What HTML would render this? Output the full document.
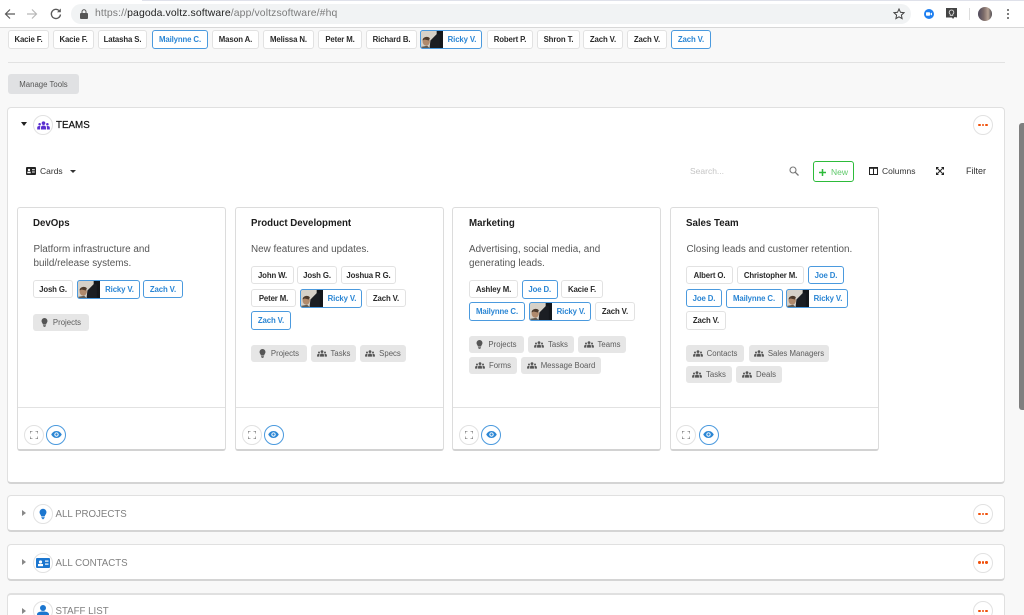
<!DOCTYPE html>
<html><head><meta charset="utf-8"><style>
*{box-sizing:border-box}
html,body{margin:0;padding:0;width:1024px;height:615px;overflow:hidden;background:#f8f8f8;font-family:"Liberation Sans",sans-serif;color:#222}
#w{position:relative;width:1024px;height:615px;overflow:hidden;background:#f8f8f8}
.a{position:absolute}
.c{position:absolute;height:18px;background:#fff;border:1px solid #e2e2e2;border-radius:3px;font-size:7.8px;font-weight:700;color:#2a2a2a;display:flex;align-items:center;justify-content:center;white-space:nowrap;letter-spacing:-.12px}
.b{border-color:#4b9ade;color:#2b86d4}
.p{position:absolute;left:-1px;top:-1px;bottom:-1px;width:23px;border-radius:3px 0 0 3px;overflow:hidden;border:1px solid #4b9ade;border-right:0}
.r{padding-left:22px;height:19px}
.t{position:absolute;height:17px;background:#e6e6e6;border-radius:3px;font-size:7.8px;color:#5c5c5c;display:flex;align-items:center;justify-content:center;gap:4px;white-space:nowrap}
.card{position:absolute;top:207px;width:209px;height:244px;background:#fff;border:1px solid #dcdcdc;border-bottom:2px solid #d2d2d2;border-radius:3px}
.panel{position:absolute;left:7px;width:998px;background:#fff;border:1px solid #e0e0e0;border-bottom:2px solid #d4d4d4;border-radius:4px}
.h{position:absolute;font-size:9.7px;font-weight:700;color:#1d1d1d;white-space:nowrap}
.d{position:absolute;font-size:9.9px;line-height:14px;color:#555;white-space:nowrap}
.circ{position:absolute;width:20px;height:20px;border-radius:50%;background:#fff;border:1px solid #e2e2e2;display:flex;align-items:center;justify-content:center}
.sec{position:absolute;left:55px;font-size:9.7px;color:#808080;white-space:nowrap}
.tb{position:absolute;font-size:8.5px;color:#333;white-space:nowrap}
.dots{display:flex;gap:1px}.dots i{width:2.4px;height:2.4px;border-radius:50%;background:#f0500a;display:block}
svg{display:block}
</style></head><body><div id="w">
<svg width="0" height="0" style="position:absolute"><defs>
<symbol id="ppl" viewBox="0 0 14 10"><circle cx="7" cy="2.4" r="2"/><circle cx="2.7" cy="3.6" r="1.4"/><circle cx="11.3" cy="3.6" r="1.4"/><path d="M4.2 9.5V7.2C4.2 5.8 5.3 5 7 5s2.8.8 2.8 2.2v2.3zM0 9.5V7.4C0 6.2 1 5.6 2.4 5.6c.5 0 .9.1 1.2.2-.3.4-.4.9-.4 1.4v2.3zM14 9.5V7.4c0-1.2-1-1.8-2.4-1.8-.5 0-.9.1-1.2.2.3.4.4.9.4 1.4v2.3z"/></symbol>
<symbol id="bulb" viewBox="0 0 10 13"><path d="M5 0a4.3 4.3 0 0 0-4.3 4.3c0 2.2 1.7 3.1 2 5h4.6c.3-1.900 2-2.800 2-5A4.300 4.300 0 0 0 5 0z"/><rect x="3" y="10" width="4" height="1.200"/><rect x="3.600" y="11.700" width="2.800" height="1.200"/></symbol>
<symbol id="ph" viewBox="0 0 22 18" preserveAspectRatio="none"><rect width="22" height="18" fill="#d6d1c8"/><rect x="15" width="7" height="18" fill="#14171b"/><path d="M8 18L9 9l6-6 3 0v15z" fill="#1b1e23"/><ellipse cx="5" cy="10" rx="3.500" ry="4" fill="#b08a6c"/><path d="M1.500 9c0-3.500 5.500-4.500 7-2l-1 2-4-1z" fill="#4d3a2b"/><path d="M0 18v-3l6-1 4 4z" fill="#5f5a52"/></symbol>
<symbol id="eye" viewBox="0 0 12 8"><path d="M6 0C3.300 0 1.200 1.600 0 4c1.200 2.400 3.300 4 6 4s4.800-1.600 6-4c-1.200-2.400-3.300-4-6-4zm0 6.500A2.500 2.500 0 1 1 6 1.500a2.500 2.500 0 0 1 0 5z"/><circle cx="6" cy="4" r="1.400"/></symbol>
<symbol id="exp" viewBox="0 0 8 8"><path d="M0 2.500V0h2.500M5.500 0H8v2.500M8 5.500V8H5.500M2.500 8H0V5.500" fill="none" stroke="#666" stroke-width="1"/></symbol>
</defs></svg>

<!-- browser bar -->
<div class="a" style="left:0;top:0;width:1024px;height:28px;background:#fff;border-bottom:1px solid #d8d8d8"></div>
<div class="a" style="left:142px;top:0;width:882px;height:1px;background:#dfe1ea"></div>
<svg class="a" style="left:3px;top:7px" width="14" height="14" viewBox="0 0 14 14"><path d="M12 7H2.500M7 2.500L2.500 7 7 11.500" fill="none" stroke="#5a5a5a" stroke-width="1.200"/></svg>
<svg class="a" style="left:25px;top:7px" width="14" height="14" viewBox="0 0 14 14"><path d="M2 7h9.500M7 2.500L11.500 7 7 11.500" fill="none" stroke="#b8b8b8" stroke-width="1.200"/></svg>
<svg class="a" style="left:49px;top:7px" width="14" height="14" viewBox="0 0 14 14"><path d="M11.500 7.500A4.600 4.600 0 1 1 10 3.500" fill="none" stroke="#5a5a5a" stroke-width="1.300"/><path d="M11.800 1.500v3.800H8z" fill="#5a5a5a"/></svg>
<div class="a" style="left:71px;top:4px;width:840px;height:20px;background:#f1f3f4;border-radius:10px"></div>
<svg class="a" style="left:80px;top:9px" width="8" height="10" viewBox="0 0 8 10"><path d="M2 4V2.800a2 2 0 0 1 4 0V4" fill="none" stroke="#555" stroke-width="1"/><rect y="4" width="8" height="6" rx="1" fill="#555"/></svg>
<div class="a" style="left:95px;top:7px;font-size:10.4px;line-height:14px;color:#7b7b7b;white-space:nowrap;letter-spacing:.12px">https://<span style="color:#222">pagoda.voltz.software</span>/app/voltzsoftware/#hq</div>
<svg class="a" style="left:893px;top:8px" width="12" height="12" viewBox="0 0 12 12"><path d="M6 1l1.500 3.300 3.500.4-2.600 2.400.7 3.500L6 8.800l-3.100 1.800.7-3.500L1 4.700l3.500-.4z" fill="none" stroke="#444" stroke-width="1"/></svg>
<svg class="a" style="left:924px;top:9px" width="10" height="10" viewBox="0 0 10 10"><circle cx="5" cy="5" r="5" fill="#1f7ff0"/><rect x="2" y="3.300" width="4" height="3.400" rx=".7" fill="#fff"/><path d="M6.300 4.800L8 3.500v3L6.300 5.200z" fill="#fff"/></svg>
<svg class="a" style="left:946px;top:8px" width="11" height="11" viewBox="0 0 11 11"><path d="M0 0h11v9.500L8.500 9 7 11l-1-1.500H0z" fill="#444"/><path d="M5.500 2a2.300 2.300 0 0 0-1.300 4.200V7.300h2.600V6.200A2.300 2.300 0 0 0 5.500 2z" fill="none" stroke="#e4e4e4" stroke-width=".8"/></svg>
<div class="a" style="left:969px;top:8px;width:1px;height:12px;background:#ddd"></div>
<div class="a" style="left:978px;top:7px;width:14px;height:14px;border-radius:50%;background:linear-gradient(90deg,#4f4a5c 0%,#7b6a68 40%,#b5a193 72%,#4d4a50 100%)"></div>
<div class="a" style="left:1007px;top:9px;width:2px;height:2px;border-radius:50%;background:#555;box-shadow:0 4px 0 #555,0 8px 0 #555"></div>

<!-- top chips -->
<div class="c" style="left:8px;top:30px;width:41px;height:19px">Kacie F.</div>
<div class="c" style="left:53px;top:30px;width:41px;height:19px">Kacie F.</div>
<div class="c" style="left:98px;top:30px;width:49px;height:19px">Latasha S.</div>
<div class="c b" style="left:152px;top:30px;width:56px;height:19px">Mailynne C.</div>
<div class="c" style="left:212px;top:30px;width:47px;height:19px">Mason A.</div>
<div class="c" style="left:263px;top:30px;width:51px;height:19px">Melissa N.</div>
<div class="c" style="left:318px;top:30px;width:44px;height:19px">Peter M.</div>
<div class="c" style="left:366px;top:30px;width:51px;height:19px">Richard B.</div>
<div class="c b r" style="left:420px;top:30px;width:62px"><div class="p"><svg width="23" height="19"><use href="#ph"/></svg></div>Ricky V.</div>
<div class="c" style="left:487px;top:30px;width:46px;height:19px">Robert P.</div>
<div class="c" style="left:537px;top:30px;width:43px;height:19px">Shron T.</div>
<div class="c" style="left:583px;top:30px;width:40px;height:19px">Zach V.</div>
<div class="c" style="left:627px;top:30px;width:40px;height:19px">Zach V.</div>
<div class="c b" style="left:671px;top:30px;width:40px;height:19px">Zach V.</div>

<div class="a" style="left:8px;top:62px;width:997px;height:1px;background:#e2e2e2"></div>
<div class="a" style="left:8px;top:74px;width:71px;height:20px;background:#e0e1e3;border-radius:3px;font-size:7.8px;color:#555;display:flex;align-items:center;justify-content:center">Manage Tools</div>

<!-- Teams panel -->
<div class="panel" style="top:107px;height:377px"></div>
<div class="a" style="left:21px;top:122px;width:0;height:0;border-left:3.500px solid transparent;border-right:3.500px solid transparent;border-top:4px solid #222"></div>
<div class="circ" style="left:33px;top:115px"><svg width="13" height="9" fill="#5a2fd0"><use href="#ppl"/></svg></div>
<div class="a" style="left:56px;top:120px;font-size:9.8px;font-weight:400;color:#111;-webkit-text-stroke:.2px #111;white-space:nowrap">TEAMS</div>
<div class="circ" style="left:973px;top:115px"><div class="dots"><i></i><i></i><i></i></div></div>

<svg class="a" style="left:26px;top:167px" width="10" height="8" viewBox="0 0 10 8"><rect width="10" height="8" rx="1" fill="#222"/><circle cx="3" cy="3" r="1.200" fill="#fff"/><rect x="1.300" y="4.700" width="3.400" height="1.600" fill="#fff"/><rect x="6" y="2.200" width="2.800" height="1" fill="#fff"/><rect x="6" y="4.500" width="2.800" height="1" fill="#fff"/></svg>
<div class="tb" style="left:40px;top:166px">Cards</div>
<div class="a" style="left:69.500px;top:170px;width:0;height:0;border-left:3px solid transparent;border-right:3px solid transparent;border-top:3px solid #333"></div>

<div class="tb" style="left:690px;top:166px;color:#c4c4c4">Search...</div>
<svg class="a" style="left:789px;top:166px" width="10" height="10" viewBox="0 0 10 10"><circle cx="4" cy="4" r="3" fill="none" stroke="#777" stroke-width="1.100"/><path d="M6.200 6.200L9.500 9.500" stroke="#777" stroke-width="1.300"/></svg>
<div class="a" style="left:813px;top:161px;width:41px;height:21px;border:1px solid #2dbb3a;border-radius:3px;background:#fff"></div>
<svg class="a" style="left:819px;top:169px" width="7" height="7" viewBox="0 0 7 7"><path d="M3.500 0v7M0 3.500h7" stroke="#2dbb3a" stroke-width="1.500"/></svg>
<div class="tb" style="left:831px;top:167px;color:#5fc96a">New</div>
<svg class="a" style="left:869px;top:167px" width="9" height="8" viewBox="0 0 9 8"><rect x=".5" y=".5" width="8" height="7" fill="none" stroke="#222"/><rect width="9" height="1.800" fill="#222"/><path d="M4.500 0v8" stroke="#222"/></svg>
<div class="tb" style="left:882px;top:166px">Columns</div>
<svg class="a" style="left:936px;top:167px" width="8" height="8" viewBox="0 0 8 8"><path d="M1.500 1.500l5 5M6.500 1.500l-5 5" stroke="#222" stroke-width="1"/><path d="M0 0h3L0 3zM8 0v3L5 0zM8 8H5l3-3zM0 8V5l3 3z" fill="#222"/></svg>
<div class="tb" style="left:966px;top:166px;font-size:9px">Filter</div>

<!-- card 1 -->
<div class="card" style="left:17px"><div class="a" style="left:0;right:0;top:199px;height:1px;background:#e2e2e2"></div></div>
<div class="h" style="left:33px;top:218px">DevOps</div>
<div class="d" style="left:33.500px;top:243px">Platform infrastructure and<br>build/release systems.</div>
<div class="c" style="left:33px;top:280px;width:40px">Josh G.</div>
<div class="c b r" style="left:77px;top:280px;width:63px"><div class="p"><svg width="23" height="19"><use href="#ph"/></svg></div>Ricky V.</div>
<div class="c b" style="left:143px;top:280px;width:40px">Zach V.</div>
<div class="t" style="left:33px;top:314px;width:56px;gap:5px"><svg width="7" height="9" fill="#555"><use href="#bulb"/></svg>Projects</div>
<div class="circ" style="left:23.500px;top:424.500px"><svg width="8" height="8"><use href="#exp"/></svg></div>
<div class="circ" style="left:46px;top:424.500px;border-color:#4b9ade"><svg width="11" height="7" fill="#2b86d4"><use href="#eye"/></svg></div>

<!-- card 2 -->
<div class="card" style="left:235px"><div class="a" style="left:0;right:0;top:199px;height:1px;background:#e2e2e2"></div></div>
<div class="h" style="left:251px;top:218px">Product Development</div>
<div class="d" style="left:251px;top:243px">New features and updates.</div>
<div class="c" style="left:251px;top:266px;width:43px">John W.</div>
<div class="c" style="left:297px;top:266px;width:40px">Josh G.</div>
<div class="c" style="left:341px;top:266px;width:55px">Joshua R G.</div>
<div class="c" style="left:251px;top:289px;width:45px">Peter M.</div>
<div class="c b r" style="left:300px;top:288.500px;width:62px"><div class="p"><svg width="23" height="19"><use href="#ph"/></svg></div>Ricky V.</div>
<div class="c" style="left:366px;top:289px;width:40px">Zach V.</div>
<div class="c b" style="left:251px;top:311px;width:40px;height:19px">Zach V.</div>
<div class="t" style="left:251px;top:345px;width:56px;gap:5px"><svg width="7" height="9" fill="#555"><use href="#bulb"/></svg>Projects</div>
<div class="t" style="left:311px;top:345px;width:45px"><svg width="10" height="7" fill="#555"><use href="#ppl"/></svg>Tasks</div>
<div class="t" style="left:360px;top:345px;width:46px"><svg width="10" height="7" fill="#555"><use href="#ppl"/></svg>Specs</div>
<div class="circ" style="left:241.500px;top:424.500px"><svg width="8" height="8"><use href="#exp"/></svg></div>
<div class="circ" style="left:263.500px;top:424.500px;border-color:#4b9ade"><svg width="11" height="7" fill="#2b86d4"><use href="#eye"/></svg></div>

<!-- card 3 -->
<div class="card" style="left:452px"><div class="a" style="left:0;right:0;top:199px;height:1px;background:#e2e2e2"></div></div>
<div class="h" style="left:469px;top:218px">Marketing</div>
<div class="d" style="left:469px;top:243px">Advertising, social media, and<br>generating leads.</div>
<div class="c" style="left:469px;top:280px;width:49px">Ashley M.</div>
<div class="c b" style="left:522px;top:280px;width:35.500px;height:19px">Joe D.</div>
<div class="c" style="left:561px;top:280px;width:42px">Kacie F.</div>
<div class="c b" style="left:469px;top:302px;width:56px;height:19px">Mailynne C.</div>
<div class="c b r" style="left:529px;top:302px;width:62px"><div class="p"><svg width="23" height="19"><use href="#ph"/></svg></div>Ricky V.</div>
<div class="c" style="left:595px;top:302px;width:40px;height:19px">Zach V.</div>
<div class="t" style="left:469px;top:336px;width:55px;gap:5px"><svg width="7" height="9" fill="#555"><use href="#bulb"/></svg>Projects</div>
<div class="t" style="left:528px;top:336px;width:46px"><svg width="10" height="7" fill="#555"><use href="#ppl"/></svg>Tasks</div>
<div class="t" style="left:578px;top:336px;width:48px"><svg width="10" height="7" fill="#555"><use href="#ppl"/></svg>Teams</div>
<div class="t" style="left:469px;top:357px;width:48px"><svg width="10" height="7" fill="#555"><use href="#ppl"/></svg>Forms</div>
<div class="t" style="left:521px;top:357px;width:80px"><svg width="10" height="7" fill="#555"><use href="#ppl"/></svg>Message Board</div>
<div class="circ" style="left:459px;top:424.500px"><svg width="8" height="8"><use href="#exp"/></svg></div>
<div class="circ" style="left:481px;top:424.500px;border-color:#4b9ade"><svg width="11" height="7" fill="#2b86d4"><use href="#eye"/></svg></div>

<!-- card 4 -->
<div class="card" style="left:670px"><div class="a" style="left:0;right:0;top:199px;height:1px;background:#e2e2e2"></div></div>
<div class="h" style="left:686px;top:218px">Sales Team</div>
<div class="d" style="left:686.500px;top:243px">Closing leads and customer retention.</div>
<div class="c" style="left:686px;top:266px;width:47px">Albert O.</div>
<div class="c" style="left:737px;top:266px;width:67px">Christopher M.</div>
<div class="c b" style="left:808px;top:266px;width:36px">Joe D.</div>
<div class="c b" style="left:686px;top:289px;width:36px">Joe D.</div>
<div class="c b" style="left:725.500px;top:288.500px;width:57px;height:19px">Mailynne C.</div>
<div class="c b r" style="left:786px;top:288.500px;width:62px"><div class="p"><svg width="23" height="19"><use href="#ph"/></svg></div>Ricky V.</div>
<div class="c" style="left:686px;top:311px;width:40px;height:19px">Zach V.</div>
<div class="t" style="left:686px;top:345px;width:58px"><svg width="10" height="7" fill="#555"><use href="#ppl"/></svg>Contacts</div>
<div class="t" style="left:749px;top:345px;width:80px"><svg width="10" height="7" fill="#555"><use href="#ppl"/></svg>Sales Managers</div>
<div class="t" style="left:686px;top:366px;width:46px"><svg width="10" height="7" fill="#555"><use href="#ppl"/></svg>Tasks</div>
<div class="t" style="left:736px;top:366px;width:46px"><svg width="10" height="7" fill="#555"><use href="#ppl"/></svg>Deals</div>
<div class="circ" style="left:676px;top:424.500px"><svg width="8" height="8"><use href="#exp"/></svg></div>
<div class="circ" style="left:698.500px;top:424.500px;border-color:#4b9ade"><svg width="11" height="7" fill="#2b86d4"><use href="#eye"/></svg></div>

<!-- collapsed sections -->
<div class="panel" style="top:495px;height:37px"></div>
<div class="a" style="left:22px;top:510px;width:0;height:0;border-top:3.500px solid transparent;border-bottom:3.500px solid transparent;border-left:4px solid #888"></div>
<div class="circ" style="left:33px;top:504px"><svg width="8" height="12" fill="#1b76cf"><use href="#bulb"/></svg></div>
<div class="sec" style="left:55.500px;top:508.500px">ALL PROJECTS</div>
<div class="circ" style="left:973px;top:504px"><div class="dots"><i></i><i></i><i></i></div></div>

<div class="panel" style="top:544px;height:37px"></div>
<div class="a" style="left:22px;top:558.500px;width:0;height:0;border-top:3.500px solid transparent;border-bottom:3.500px solid transparent;border-left:4px solid #888"></div>
<div class="circ" style="left:33px;top:552.500px"><svg width="14" height="10" viewBox="0 0 14 10"><rect width="14" height="10" rx="1" fill="#1b76cf"/><circle cx="4.500" cy="4" r="1.600" fill="#fff"/><rect x="2" y="6" width="5" height="2.200" fill="#fff"/><rect x="9" y="2.500" width="3.500" height="1.200" fill="#fff"/><rect x="9" y="5.500" width="3.500" height="1.200" fill="#fff"/></svg></div>
<div class="sec" style="left:55.500px;top:557.500px">ALL CONTACTS</div>
<div class="circ" style="left:973px;top:552.500px"><div class="dots"><i></i><i></i><i></i></div></div>

<div class="panel" style="top:593px;height:30px;border-top-width:2px"></div>
<div class="a" style="left:22px;top:607.500px;width:0;height:0;border-top:3.500px solid transparent;border-bottom:3.500px solid transparent;border-left:4px solid #888"></div>
<div class="circ" style="left:33px;top:601px"><svg width="12" height="12" viewBox="0 0 12 12" fill="#1b76cf"><circle cx="6" cy="3" r="3"/><path d="M0 12V9.500C0 7.500 2 6.500 6 6.500s6 1 6 3V12z"/></svg></div>
<div class="sec" style="left:55.500px;top:605.500px">STAFF LIST</div>
<div class="circ" style="left:973px;top:601px"><div class="dots"><i></i><i></i><i></i></div></div>

<!-- scrollbar -->
<div class="a" style="left:1019px;top:123px;width:5px;height:287px;background:#7f7f7f;border-radius:3px 0 0 3px"></div>
</div></body></html>
